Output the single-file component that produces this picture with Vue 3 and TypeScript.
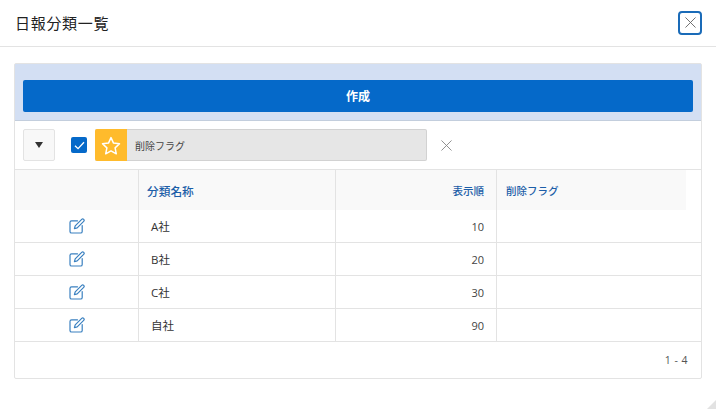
<script setup lang="ts">
interface Row { name: string; order: number }
const rows: Row[] = [
  { name: 'A社', order: 10 },
  { name: 'B社', order: 20 },
  { name: 'C社', order: 30 },
  { name: '自社', order: 90 },
]
</script>

<template>
  <div class="dialog">
    <header class="head">
      <h1 class="title">日報分類一覧</h1>
      <button class="close" type="button" aria-label="閉じる">
        <svg width="11" height="11" viewBox="0 0 12 12"><path d="M.5.5l11 11M11.5.5l-11 11" stroke="#666" fill="none" /></svg>
      </button>
    </header>
    <main class="body">
      <section class="panel">
        <div class="band"><button class="create" type="button">作成</button></div>
        <div class="filter">
          <button class="drop" type="button" aria-label="開く"><span class="tri"></span></button>
          <span class="check">
            <svg width="11" height="9" viewBox="0 0 12 10"><path d="M1 5.2l3.4 3.3L11 1.3" stroke="#fff" stroke-width="1.5" fill="none" /></svg>
          </span>
          <div class="chip">
            <span class="star">
              <svg width="20" height="19" viewBox="0 0 20 19"><path d="M10 1.6l2.5 5.5 6 .7-4.4 4.1 1.2 5.900L10 14.9l-5.3 2.9 1.2-5.900L1.500 7.800l6-.7z" stroke="#fff" stroke-width="1.500" fill="none" stroke-linejoin="round" /></svg>
            </span>
            <span class="chip-label">削除フラグ</span>
          </div>
          <svg class="clear" width="11" height="11" viewBox="0 0 12 12"><path d="M.5.5l11 11M11.500.5l-11 11" stroke="#888" fill="none" /></svg>
        </div>
        <div class="grid">
          <div class="hrow">
            <div class="hc c1"></div>
            <div class="hc c2 wide">分類名称</div>
            <div class="hc c3">表示順</div>
            <div class="hc c4">削除フラグ</div>
          </div>
          <div v-for="r in rows" :key="r.name" class="row">
            <div class="td c1">
              <svg class="edit" width="16" height="16" viewBox="0 0 16 16" fill="none" stroke="#3a80c0" stroke-width="1.200" stroke-linejoin="round" stroke-linecap="round">
                <path d="M8.500 2.800H2.600A1.600 1.600 0 0 0 1 4.400v9a1.600 1.600 0 0 0 1.600 1.600h9a1.600 1.600 0 0 0 1.600-1.600V7.500" />
                <path d="M12.700 1.300a1.400 1.400 0 0 1 2 2L8.200 9.800l-2.800.8.800-2.800z" />
              </svg>
            </div>
            <div class="td c2 name">{{ r.name }}</div>
            <div class="td c3 num">{{ r.order }}</div>
            <div class="td c4"></div>
          </div>
        </div>
        <footer class="foot">1 - 4</footer>
      </section>
    </main>
    <svg class="grip" width="9" height="9" viewBox="0 0 9 9"><path d="M9 0v9H0z" fill="#e2e2e2" /></svg>
  </div>
</template>

<style>
html, body { margin: 0; background: #fff; }
</style>

<style scoped>
.dialog {
  position: relative;
  width: 716px;
  height: 409px;
  overflow: hidden;
  background: #fff;
  color: #333;
  font-family: "Open Sans", "Noto Sans CJK JP", sans-serif;
  font-size: 11px;
}
.head {
  box-sizing: border-box;
  height: 47px;
  display: flex;
  align-items: center;
  justify-content: space-between;
  padding: 0 14px 1px 15px;
  border-bottom: 1px solid #e3e3e3;
}
.title { margin: 0; font-size: 15px; font-weight: 400; color: #222; letter-spacing: .7px; }
.close {
  box-sizing: border-box;
  width: 24px;
  height: 24px;
  padding: 0;
  display: flex;
  align-items: center;
  justify-content: center;
  background: #fff;
  border: 2px solid #1a6bb8;
  border-radius: 4px;
}
.body { padding: 16px 14px 0; }
.panel {
  box-sizing: border-box;
  width: 688px;
  height: 316px;
  border: 1px solid #e3e3e3;
  border-radius: 2px;
}
.band {
  box-sizing: border-box;
  height: 57px;
  padding: 16px 8px 8px;
  background: #d3dff3;
  border-bottom: 1px solid #c3cedd;
}
.create {
  display: block;
  width: 100%;
  height: 32px;
  padding: 0;
  border: 0;
  border-radius: 2px;
  background: #0569c9;
  color: #fff;
  font: inherit;
  font-size: 12px;
  font-weight: 700;
}
.filter {
  box-sizing: border-box;
  height: 49px;
  display: flex;
  align-items: center;
  padding: 0 8px;
  border-bottom: 1px solid #e3e3e3;
}
.drop {
  box-sizing: border-box;
  width: 32px;
  height: 32px;
  padding: 0;
  display: flex;
  align-items: center;
  justify-content: center;
  background: #f8f8f8;
  border: 1px solid #e3e3e3;
  border-radius: 2px;
}
.tri { width: 0; height: 0; border: 4px solid transparent; border-top: 6px solid #333; border-bottom: 0; }
.check {
  width: 16px;
  height: 16px;
  margin-left: 16px;
  display: flex;
  align-items: center;
  justify-content: center;
  background: #0569c9;
  border-radius: 2px;
}
.chip {
  box-sizing: border-box;
  width: 332px;
  height: 32px;
  margin-left: 8px;
  display: flex;
  align-items: center;
  background: #e6e6e6;
  border: 1px solid #d2d2d2;
  border-left: 0;
  border-radius: 2px;
}
.star {
  width: 32px;
  height: 32px;
  flex: none;
  display: flex;
  align-items: center;
  justify-content: center;
  background: #ffbb2c;
  border-radius: 2px 0 0 2px;
}
.chip-label { margin-left: 8px; color: #444; font-size: 10px; }
.clear { margin-left: 14px; }
.hrow { display: flex; width: 671px; height: 40px; background: #f9f9f9; }
.hc { display: flex; align-items: center; color: #1c5ea8; font-size: 10.500px; font-weight: 500; }
.wide { font-size: 11.700px; }
.row { display: flex; height: 33px; box-sizing: border-box; border-bottom: 1px solid #e3e3e3; }
.td { display: flex; align-items: center; color: #333; }
.c1 { box-sizing: border-box; width: 124px; flex: none; justify-content: center; border-right: 1px solid #e3e3e3; }
.c2 { box-sizing: border-box; width: 197px; flex: none; padding-left: 8px; border-right: 1px solid #e3e3e3; }
.c3 { box-sizing: border-box; width: 161px; flex: none; justify-content: flex-end; padding-right: 12px; border-right: 1px solid #e3e3e3; }
.c4 { padding-left: 9px; flex: 1; }
.name { padding-left: 12px; font-size: 11.500px; }
.num { color: #444; }
.foot {
  height: 36px;
  display: flex;
  align-items: center;
  justify-content: flex-end;
  padding-right: 13px;
  color: #555;
  font-size: 10.500px;
  letter-spacing: .5px;
}
.grip { position: absolute; right: 0; bottom: 0; }
</style>
